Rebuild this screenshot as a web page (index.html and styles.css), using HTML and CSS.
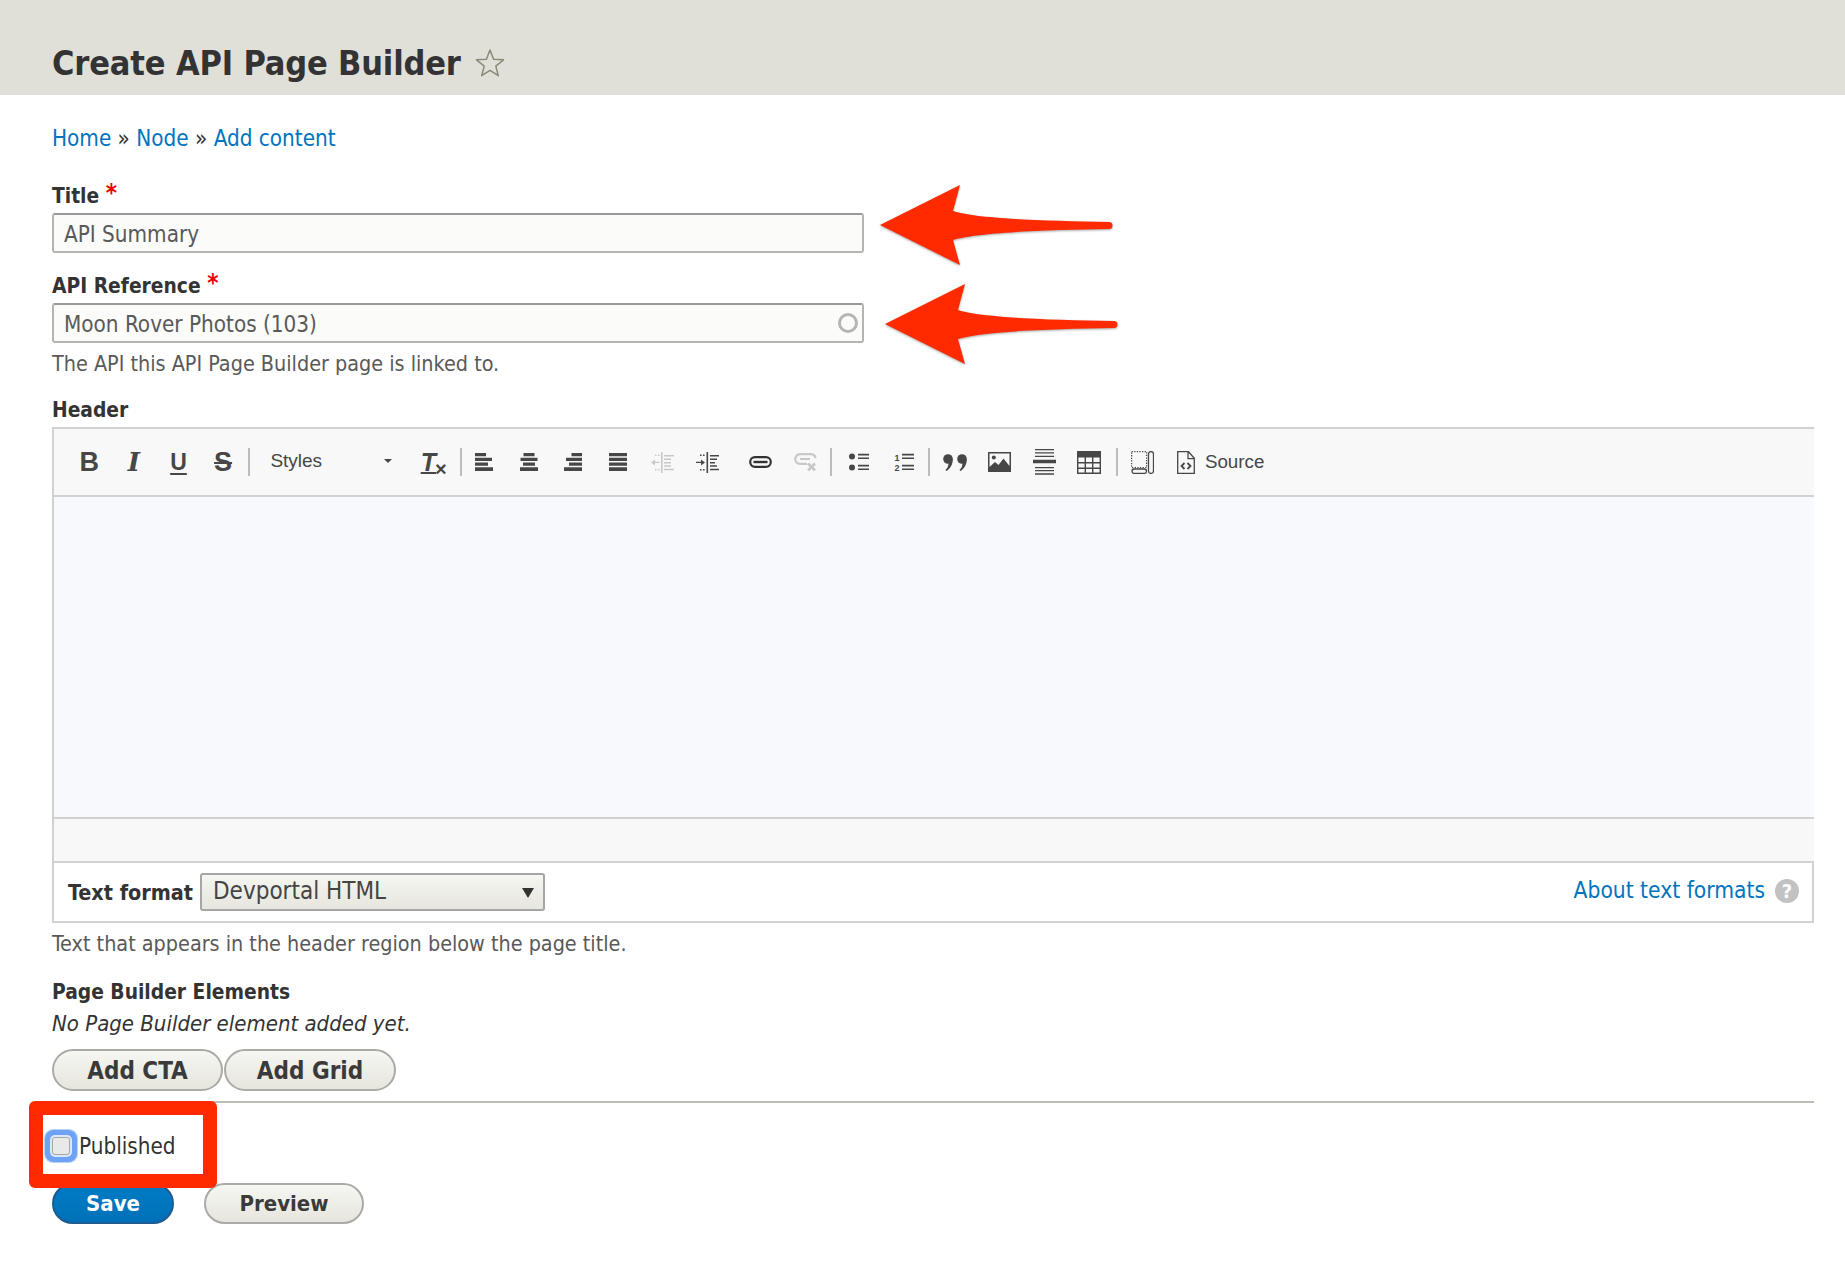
FILE: index.html
```html
<!DOCTYPE html>
<html lang="en">
<head>
    <meta charset="UTF-8">
    <meta name="viewport" content="width=device-width, initial-scale=1.0">
    <title>Create API Page Builder</title>
    <link rel="stylesheet" href="styles.css">
</head>
<body>
    <header class="page-head">
        <h1>Create API Page Builder</h1>
        <svg class="star" viewBox="0 0 30 30"><path d="M15 2l3.600 9.200 9.900.6-7.700 6.300 2.500 9.600L15 22.400l-8.300 5.300 2.500-9.600-7.700-6.300 9.900-.6z"/></svg>
    </header>

    <main class="content">
        <nav class="breadcrumb"><a href="#">Home</a> » <a href="#">Node</a> » <a href="#">Add content</a></nav>

        <form>
            <label class="field-label first">Title <span class="req">*</span></label>
            <input class="text-input" type="text" value="API Summary">

            <label class="field-label second">API Reference <span class="req">*</span></label>
            <div class="auto-wrap">
                <input class="text-input" type="text" value="Moon Rover Photos (103)">
                <span class="throbber"></span>
            </div>
            <p class="desc api-desc">The API this API Page Builder page is linked to.</p>

            <label class="field-label header-label">Header</label>
            <div class="editor">
                <div class="toolbar">
                    <span class="tb tb-b">B</span>
                    <span class="tb tb-i">I</span>
                    <span class="tb tb-u"><span>U</span></span>
                    <span class="tb tb-s"><span>S</span></span>
                    <span class="sep sep-first"></span>
                    <span class="combo">Styles<span class="combo-arrow"></span></span>
                    <span class="tb tb-tx"><span class="tx-t">T</span><span class="tx-x">×</span></span>
                    <span class="sep sep-a"></span>
                    <span class="tb"><svg class="ic18" viewBox="0 0 18 18"><path d="M0 0h11v3.300H0zM0 4.700h17v3.300H0zM0 9.500h13v3.300H0zM0 14.300h18V18H0z"/></svg></span>
                    <span class="tb"><svg class="ic18" viewBox="0 0 18 18"><path d="M3.500 0h11v3.300h-11zM.5 4.700h17v3.300H.5zM3 9.500h12v3.300H3zM0 14.300h18V18H0z"/></svg></span>
                    <span class="tb"><svg class="ic18" viewBox="0 0 18 18"><path d="M7.500 0H18v3.300H7.500zM2 4.700h16v3.300H2zM5 9.500h13v3.300H5zM0 14.300h18V18H0z"/></svg></span>
                    <span class="tb"><svg class="ic18" viewBox="0 0 18 18"><path d="M0 0h18v3.300H0zM0 4.700h18v3.300H0zM0 9.500h18v3.300H0zM0 14.300h18V18H0z"/></svg></span>
                    <span class="tb dim"><svg class="ic22" viewBox="0 0 23 21"><path d="M0 10.400l4-3v2.300h4.500v1.400H4v2.300zM10 0h1.600v21H10zM13 3h10v1.600H13zM13 6.500h7v1.400h-7zM13 10h7v1.400h-7zM13 13.300h7v1.400h-7zM13 16.700h10v1.600H13zM4 2.500h1.600V4H4zM7 2.500h1.600V4H7zM4 17h1.600v1.500H4zM7 17h1.600v1.500H7z"/></svg></span>
                    <span class="tb"><svg class="ic22" viewBox="0 0 23 21"><path d="M0 9.700h5V7.400l4 3-4 3v-2.300H0zM10.500 0h1.600v21h-1.600zM14 3h9v1.600h-9zM14 6.500h7v1.400h-7zM14 10h5v1.400h-5zM14 13.300h7v1.400h-7zM14 16.700h9v1.600h-9zM4 2.500h1.600V4H4zM7 2.500h1.600V4H7zM4 17h1.600v1.500H4zM7 17h1.600v1.500H7z"/></svg></span>
                    <span class="tb gap-left"><svg class="ic-link stroke-icon" viewBox="0 0 23 12"><rect x="1.200" y="1.200" width="20.600" height="9.600" rx="4.800"/><path class="link-bar" d="M4.500 6h14"/></svg></span>
                    <span class="tb dim"><svg class="ic-unlink stroke-icon" viewBox="0 0 23 18"><path d="M13 10.800H6a4.800 4.800 0 0 1 0-9.600h11a4.800 4.800 0 0 1 4.500 4M6 6h10"/><path class="x-mark" d="M14 10.500l7 7M21 10.500l-7 7"/></svg></span>
                    <span class="sep sep-b"></span>
                    <span class="tb"><svg class="ic-list" viewBox="0 0 20 18"><circle cx="3" cy="3.500" r="3"/><circle cx="3" cy="14.500" r="3"/><path d="M9 .8h11v1.600H9zM9 4.500h11v1.600H9zM9 11.800h11v1.600H9zM9 15.500h11v1.600H9z"/></svg></span>
                    <span class="tb"><svg class="ic-list" viewBox="0 0 20 18"><text class="num" x="0.500" y="8">1</text><text class="num" x="0.500" y="18">2</text><path d="M8 .8h12v1.600H8zM8 4.500h12v1.600H8zM8 11.800h12v1.600H8zM8 15.500h12v1.600H8z"/></svg></span>
                    <span class="sep sep-c"></span>
                    <span class="tb"><svg class="ic-quote" viewBox="0 0 24 17"><circle cx="5" cy="5" r="4.800"/><circle cx="19" cy="5" r="4.800"/><path d="M9.800 5c0 5.500-2.600 10-6.500 12l-.8-1c2-1.800 3-4 3-7zM23.800 5c0 5.500-2.600 10-6.500 12l-.8-1c2-1.800 3-4 3-7z"/></svg></span>
                    <span class="tb"><svg class="ic-image" viewBox="0 0 23 20"><path fill-rule="evenodd" d="M0 0h23v20H0zM1.500 1.500v13.500l5.500-5 3.500 3 5-6.500 6 7.500V1.500z"/><circle cx="5.800" cy="5.500" r="2"/></svg></span>
                    <span class="tb"><svg class="ic-hr" viewBox="0 0 23 26"><path d="M2 0h19v1.300H2zM2 3.300h19v1.300H2zM2 6.700h19V8H2zM0 10.800h23v3.500H0zM2 18h19v1.300H2zM2 21h19v1.300H2zM2 24.300h19v1.500H2z"/></svg></span>
                    <span class="tb"><svg class="ic-table" viewBox="0 0 24 23"><path fill-rule="evenodd" d="M0 0h24v23H0zM1.400 6.500v4.600h6.200V6.500zM9 6.500v4.600h6V6.500zM16.400 6.500v4.600h6.200V6.500zM1.400 12.500v4h6.200v-4zM9 12.500v4h6v-4zM16.400 12.500v4h6.200v-4zM1.400 18v3.600h6.200V18zM9 18v3.600h6V18zM16.400 18v3.600h6.200V18z"/></svg></span>
                    <span class="sep sep-d"></span>
                    <span class="tb"><svg class="ic-blocks stroke-icon thin" viewBox="0 0 23 23"><path stroke-dasharray="1.300 1.300" d="M.6.600h15v16h-15z"/><rect x="1" y="18" width="14.500" height="4.400" rx="2.200"/><rect x="17.500" y=".6" width="5" height="21.800" rx="2.500"/></svg></span>
                    <span class="source"><svg class="stroke-icon thin" viewBox="0 0 18 23"><path d="M.7.700h10.800l5.800 6.500v15.100H.7zM11 .7v7h6.300"/><path class="code-mark" d="M7.500 12l-3 3 3 3M10.500 12l3 3-3 3"/></svg>Source</span>
                </div>
                <div class="edit-area"></div>
                <div class="edit-foot"></div>
                <div class="format-bar">
                    <span class="format-label">Text format</span>
                    <div class="format-select">Devportal HTML<span class="select-arrow"></span></div>
                    <a class="format-link" href="#">About text formats</a>
                    <span class="help-icon">?</span>
                </div>
            </div>
            <p class="desc header-desc">Text that appears in the header region below the page title.</p>

            <div class="field-label builder-label">Page Builder Elements</div>
            <p class="builder-empty">No Page Builder element added yet.</p>
            <div class="add-buttons">
                <button type="button" class="btn btn-cta">Add CTA</button>
                <button type="button" class="btn btn-grid">Add Grid</button>
            </div>
            <div class="divider"></div>

            <label class="published"><input type="checkbox" class="check">Published</label>

            <div class="actions">
                <button type="button" class="btn btn-save">Save</button>
                <button type="button" class="btn btn-preview">Preview</button>
            </div>
        </form>
    </main>

    <!-- annotations drawn on top of the screenshot -->
    <svg class="arrow arrow-one" viewBox="0 0 236 82"><path d="M2 41L82 1 75 27C100 35 170 37 231 38a3.500 3.500 0 0 1 0 7C170 46 100 48 75 56l7 25z"/></svg>
    <svg class="arrow arrow-two" viewBox="0 0 236 82"><path d="M2 41L82 1 75 27C100 35 170 37 231 38a3.500 3.500 0 0 1 0 7C170 46 100 48 75 56l7 25z"/></svg>
    <div class="red-box"></div>
</body>
</html>
```

FILE: styles.css
```css
body {
    font-family: "DejaVu Sans Condensed", "DejaVu Sans", sans-serif;
    font-stretch: condensed;
    font-size: 22.3px;
    color: #333333;
    background-color: #ffffff;
    margin: 0;
    padding: 0;
    position: relative;
    height: 1282px;
    overflow: hidden;
}

.page-head {
    background-color: #e0e0d8;
    height: 95px;
    padding-left: 52px;
    display: flex;
    align-items: flex-start;
    box-sizing: border-box;
}

h1 {
    font-size: 34px;
    line-height: 40px;
    font-weight: bold;
    margin: 43px 0 0 0;
    letter-spacing: -0.15px;
}

.star {
    width: 30px;
    height: 30px;
    margin: 48px 0 0 14px;
    fill: none;
    stroke: #8a8a78;
    stroke-width: 1.5;
    stroke-linejoin: round;
}

.content {
    padding: 0 30px 0 52px;
}

.breadcrumb {
    margin-top: 31px;
    line-height: 24px;
}

a {
    color: #0074bd;
    text-decoration: none;
}

.field-label {
    display: block;
    font-size: 20.8px;
    font-weight: bold;
    line-height: 24px;
}

.first {
    margin-top: 33px;
    height: 30px;
}

.second {
    margin-top: 20px;
    height: 30px;
}

.req {
    color: #ee0000;
    font-size: 24px;
    position: relative;
    top: -2px;
}

.text-input {
    display: block;
    box-sizing: border-box;
    width: 812px;
    height: 40px;
    border: 2px solid #b4b4b0;
    border-top-color: #999999;
    border-radius: 3px;
    background-color: #fbfbf9;
    padding: 1px 10px 0 10px;
    font: inherit;
    font-stretch: condensed;
    color: #595959;
    outline: none;
}

.auto-wrap {
    position: relative;
    width: 812px;
}

.throbber {
    position: absolute;
    right: 6px;
    top: 10px;
    width: 20px;
    height: 20px;
    box-sizing: border-box;
    border: 3.5px solid #b5b5b5;
    border-radius: 50%;
}

.desc {
    margin: 0;
    color: #595959;
    font-size: 21.4px;
    line-height: 24px;
}

.api-desc {
    margin-top: 9px;
}

.header-label {
    margin-top: 22px;
}

.editor {
    margin-top: 5px;
    width: 1762px;
    box-sizing: border-box;
}

.toolbar {
    height: 70px;
    box-sizing: border-box;
    background-color: #f8f8f8;
    border: 2px solid #d1d1d1;
    border-right: none;
    padding-left: 13px;
    display: flex;
    align-items: center;
    color: #474747;
}

.tb {
    width: 44.6px;
    height: 30px;
    flex: none;
    display: flex;
    align-items: center;
    justify-content: center;
    font-family: "Liberation Sans", Arial, sans-serif;
    font-stretch: normal;
    font-size: 27px;
    font-weight: bold;
}

.tb svg {
    flex: none;
    fill: #474747;
}

.tb.dim svg {
    fill: #c8c8c8;
}

.ic18 {
    width: 18px;
    height: 18px;
}

.ic22 {
    width: 23px;
    height: 21px;
}

.ic-link {
    width: 23px;
    height: 12px;
}

.ic-unlink {
    width: 23px;
    height: 18px;
}

.ic-list {
    width: 20px;
    height: 18px;
}

.ic-quote {
    width: 24px;
    height: 17px;
}

.ic-image {
    width: 23px;
    height: 20px;
}

.ic-hr {
    width: 23px;
    height: 26px;
}

.ic-table {
    width: 24px;
    height: 23px;
}

.ic-blocks {
    width: 23px;
    height: 23px;
}

.num {
    font-family: "Liberation Sans", Arial, sans-serif;
    font-size: 9px;
    font-weight: bold;
    fill: #474747;
}

.tb svg.stroke-icon {
    fill: none;
    stroke: #333333;
    stroke-width: 2.2;
}

.tb.dim svg.stroke-icon {
    fill: none;
    stroke: #c8c8c8;
}

.tb svg.stroke-icon.thin {
    stroke: #474747;
    stroke-width: 1.3;
}

.link-bar {
    stroke-width: 2.4;
}

.x-mark {
    stroke-width: 2.6;
}

.tb-i {
    font-family: "DejaVu Serif", serif;
    font-style: italic;
    font-size: 26px;
}

.tb-u {
    font-size: 23px;
}

.tb-u span {
    text-decoration: underline;
    text-decoration-thickness: 2px;
    text-underline-offset: 3px;
}

.tb-s span {
    text-decoration: line-through;
    text-decoration-thickness: 2px;
}

.sep {
    width: 2px;
    height: 28px;
    flex: none;
    background-color: #bcbcbc;
}

.sep-first {
    margin-left: 3px;
}

.sep-a {
    margin-left: 4px;
}

.sep-b {
    margin: 0 5px 0 2px;
}

.sep-c {
    margin: 0 3px 0 2px;
}

.sep-d {
    margin: 0 2px 0 5px;
}

.gap-left {
    margin-left: 9px;
}

.combo {
    width: 161px;
    flex: none;
    position: relative;
    padding-left: 20px;
    box-sizing: border-box;
    font-family: "Liberation Sans", Arial, sans-serif;
    font-stretch: normal;
    font-size: 19px;
    color: #474747;
    top: -1px;
}

.combo-arrow {
    position: absolute;
    right: 19px;
    top: 9px;
    border-left: 4px solid transparent;
    border-right: 4px solid transparent;
    border-top: 4px solid #474747;
}

.tb-tx {
    font-size: 25px;
}

.tx-t {
    font-style: italic;
    text-decoration: underline;
    text-decoration-thickness: 2px;
}

.tx-x {
    font-size: 20px;
    position: relative;
    top: 7px;
    margin-left: -1px;
}

.source {
    display: flex;
    align-items: center;
    gap: 10px;
    margin-left: 12px;
    font-family: "Liberation Sans", Arial, sans-serif;
    font-stretch: normal;
    font-size: 18.8px;
}

.source svg {
    width: 18px;
    height: 23px;
    flex: none;
    fill: none;
    stroke: #474747;
    stroke-width: 1.3;
}

.source svg .code-mark {
    stroke-width: 1.8;
}

.edit-area {
    height: 320px;
    background-color: #f8f9fd;
    border-left: 2px solid #d1d1d1;
}

.edit-foot {
    height: 46px;
    box-sizing: border-box;
    background-color: #f8f8f8;
    border: 2px solid #d1d1d1;
    border-right: none;
}

.format-bar {
    height: 60px;
    box-sizing: border-box;
    border: 2px solid #d1d1d1;
    border-top: none;
    padding: 0 13px 0 14px;
    display: flex;
    align-items: center;
}

.format-label {
    font-size: 21.4px;
    font-weight: bold;
}

.format-select {
    width: 345px;
    height: 38px;
    box-sizing: border-box;
    margin-left: 7px;
    border: 2px solid #a6a6a6;
    border-radius: 3px;
    padding-left: 11px;
    line-height: 32px;
    font-size: 24px;
    color: #444444;
    background: linear-gradient(#f6f6f2, #e6e6de);
    position: relative;
}

.select-arrow {
    position: absolute;
    right: 9px;
    top: 13px;
    border-left: 6px solid transparent;
    border-right: 6px solid transparent;
    border-top: 10px solid #333333;
}

.format-link {
    margin-left: auto;
    margin-bottom: 4px;
    font-size: 22.6px;
}

.help-icon {
    width: 24px;
    height: 24px;
    margin-left: 10px;
    margin-bottom: 2px;
    border-radius: 50%;
    background-color: #c2c2c2;
    color: #ffffff;
    font-weight: bold;
    font-size: 20px;
    line-height: 24px;
    text-align: center;
}

.header-desc {
    margin-top: 9px;
}

.builder-label {
    margin-top: 24px;
}

.builder-empty {
    margin: 8px 0 0 0;
    font-size: 22px;
    font-style: italic;
    line-height: 24px;
}

.add-buttons {
    display: flex;
    margin-top: 13px;
}

.btn {
    height: 41px;
    box-sizing: border-box;
    border: 2px solid #aaaaa6;
    border-radius: 21px;
    background: linear-gradient(#f6f6f2, #e6e6de);
    font: inherit;
    font-stretch: condensed;
    font-size: 22px;
    font-weight: bold;
    color: #3a3a3a;
    padding: 0;
}

.add-buttons .btn {
    height: 42px;
    padding-top: 2px;
    font-size: 24px;
}

.btn-cta {
    width: 171px;
    margin-right: 1px;
}

.btn-grid {
    width: 172px;
}

.divider {
    height: 2px;
    width: 1762px;
    margin-top: 10px;
    background-color: #bebeb8;
}

.published {
    display: flex;
    align-items: center;
    height: 28px;
    margin-top: 29px;
    line-height: 28px;
}

.check {
    appearance: none;
    width: 18px;
    height: 18px;
    margin: 0 9px 0 0;
    box-sizing: border-box;
    border: 1px solid #a6a6a6;
    border-radius: 3px;
    background-color: #e9e9e9;
    box-shadow: 0 0 0 2px #dce7fb, 0 0 0 7px #6ea2f5, 0 0 0 8px #b8d2fb;
}

.actions {
    display: flex;
    align-items: flex-start;
    margin-top: 23px;
}

.btn-save {
    width: 122px;
    color: #ffffff;
    background: linear-gradient(#007bc6, #0071b8);
    border-color: #1e5c90;
}

.btn-preview {
    width: 160px;
    margin-left: 30px;
}

/* annotations */
.arrow {
    position: absolute;
    width: 236px;
    height: 82px;
    fill: #ff2a00;
    filter: drop-shadow(0 1px 1px rgba(0, 0, 0, 0.35));
}

.arrow-one {
    left: 878px;
    top: 184px;
}

.arrow-two {
    left: 883px;
    top: 283px;
}

.red-box {
    position: absolute;
    left: 29px;
    top: 1101px;
    width: 188px;
    height: 87px;
    box-sizing: border-box;
    border: 14px solid #ff2a00;
    border-radius: 6px;
}
```
